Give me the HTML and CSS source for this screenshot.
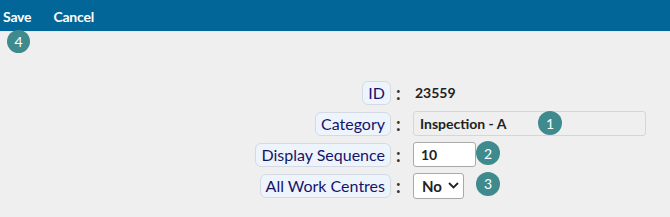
FILE: index.html
```html
<!DOCTYPE html>
<html>
<head>
    <meta charset="UTF-8">
    <title>Edit Category</title>
    <link rel="stylesheet" href="styles.css">
</head>
<body>
    <div class="toolbar">
        <a class="tool-link">Save</a>
        <a class="tool-link">Cancel</a>
        <span class="pin pin-save">4</span>
    </div>

    <div class="form">
        <div class="field-label"><span class="tag">ID</span></div>
        <div class="colon">:</div>
        <div class="field-value plain">23559</div>

        <div class="field-label"><span class="tag">Category</span></div>
        <div class="colon">:</div>
        <div class="field-value">
            <div class="readonly">Inspection - A</div>
            <span class="pin pin-category">1</span>
        </div>

        <div class="field-label"><span class="tag">Display Sequence</span></div>
        <div class="colon">:</div>
        <div class="field-value">
            <input class="text-input" type="text" value="10">
            <span class="pin pin-side">2</span>
        </div>

        <div class="field-label"><span class="tag">All Work Centres</span></div>
        <div class="colon">:</div>
        <div class="field-value">
            <div class="select">No
                <svg width="11" height="7" viewBox="0 0 11 7"><path d="M1 1 L5.5 5.5 L10 1" fill="none" stroke="#222" stroke-width="1.8"/></svg>
            </div>
            <span class="pin pin-side">3</span>
        </div>
    </div>
</body>
</html>
```

FILE: styles.css
```css
* {
    margin: 0;
    padding: 0;
    box-sizing: border-box;
}

body {
    background: #efefef;
    font-family: 'Lato', 'Open Sans', sans-serif;
    width: 670px;
    height: 217px;
    overflow: hidden;
}

.toolbar {
    position: relative;
    height: 32px;
    background: #036699;
    border-bottom: 1px solid #d8ebf3;
    display: flex;
    align-items: center;
    gap: 22px;
    padding: 2px 0 0 3px;
}

.tool-link {
    color: #fff;
    font-weight: 700;
    font-size: 14px;
    letter-spacing: -0.2px;
}

.pin {
    position: absolute;
    width: 24px;
    height: 24px;
    border-radius: 50%;
    background: #3e8a8d;
    color: #fff;
    font-size: 14px;
    display: flex;
    align-items: center;
    justify-content: center;
}

.pin-save {
    left: 7px;
    top: 30px;
    width: 23px;
    height: 23px;
}

.form {
    display: grid;
    grid-template-columns: 391px 22px auto;
    grid-auto-rows: 31px;
    align-items: center;
    margin-top: 45px;
}

.field-label {
    justify-self: end;
}

.tag {
    display: inline-block;
    background: #eef4fc;
    border: 1px solid #d3dae6;
    border-radius: 6px;
    color: #14146b;
    font-size: 16px;
    line-height: 22px;
    padding: 0 5px;
}

.colon {
    font-size: 18px;
    font-weight: 700;
    color: #333;
    padding-left: 5px;
}

.field-value {
    position: relative;
    display: flex;
    align-items: center;
}

.plain {
    font-size: 14px;
    font-weight: 700;
    color: #222;
    padding-left: 2px;
}

.readonly {
    width: 233px;
    height: 25px;
    border: 1px solid #d6d6d6;
    border-radius: 3px;
    background: #efefef;
    font-size: 14px;
    font-weight: 700;
    color: #222;
    padding: 3px 0 0 6px;
}

.text-input {
    width: 63px;
    height: 25px;
    border: 1px solid #a9a9a9;
    border-radius: 3px;
    background: #fff;
    font-family: inherit;
    font-size: 14px;
    font-weight: 700;
    color: #222;
    padding-left: 7px;
}

.select {
    width: 51px;
    height: 26px;
    border: 1px solid #a9a9a9;
    border-radius: 3px;
    background: #fff;
    font-size: 15px;
    font-weight: 700;
    color: #222;
    display: flex;
    align-items: center;
    gap: 6px;
    padding-left: 8px;
}

.pin-category {
    left: 125px;
    top: 0;
}

.pin-side {
    left: 63px;
    top: -1px;
}
```
